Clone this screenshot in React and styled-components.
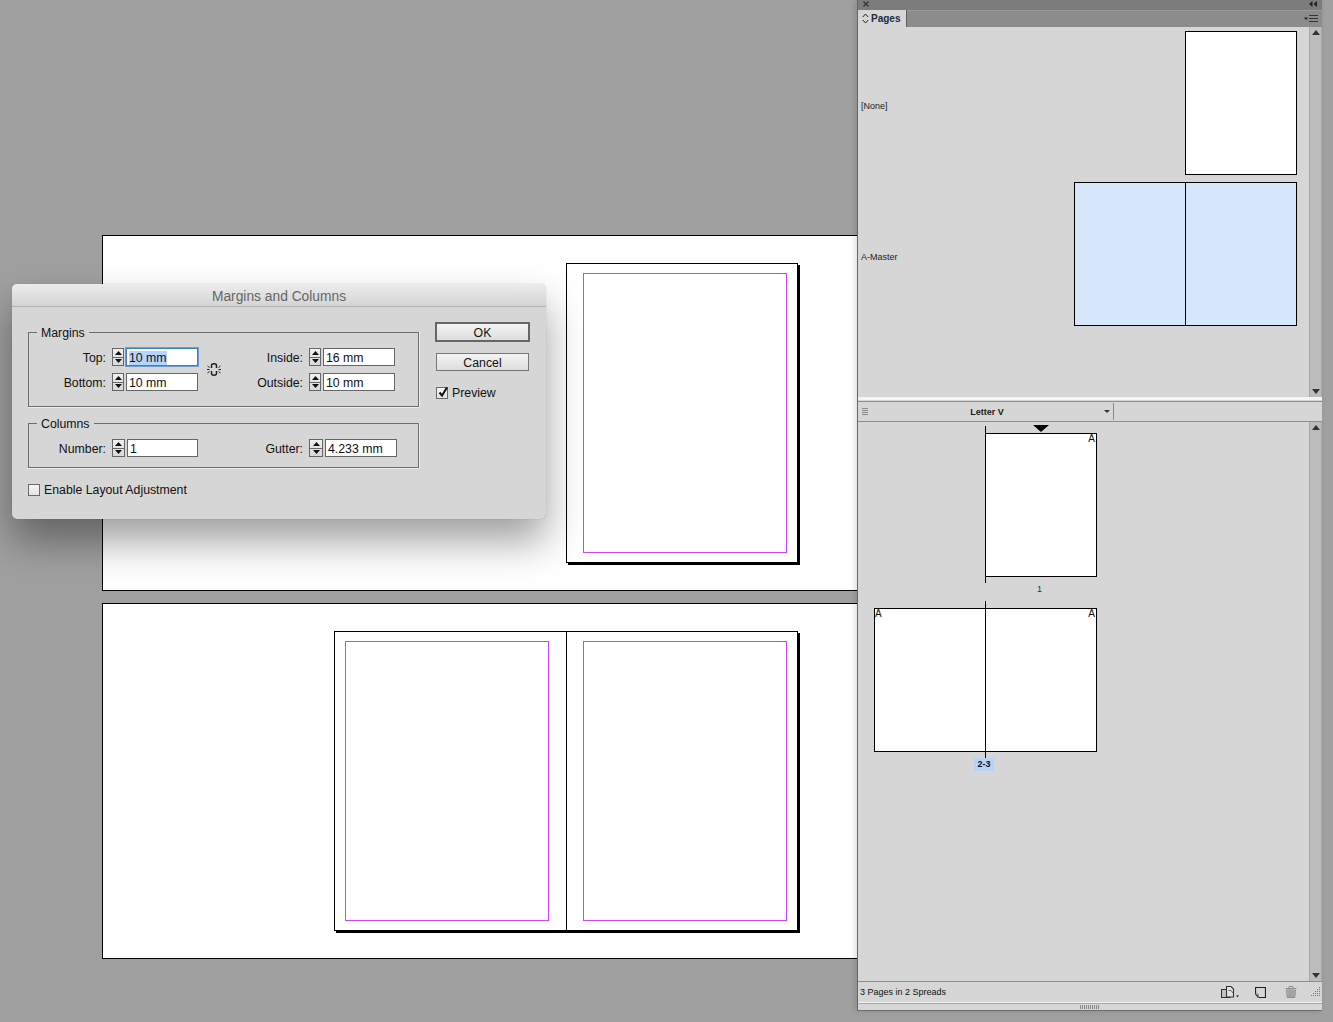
import React from "react";
import styled, { createGlobalStyle } from "styled-components";

const Global = createGlobalStyle`
  html, body { margin: 0; padding: 0; background: #a0a0a0; }
  * { box-sizing: border-box; }
  #root { width: 1333px; height: 1022px; overflow: hidden; }
`;

const Workspace = styled.div`
  position: relative;
  display: flex;
  align-items: flex-start;
  width: 1333px;
  height: 1022px;
  overflow: hidden;
  background: #a0a0a0;
  font-family: "Liberation Sans", Arial, sans-serif;
  color: #111;
`;

/* ---------- document canvas ---------- */
const Canvas = styled.main`
  flex: none;
  width: 857px;
  height: 1022px;
  padding: 235px 0 0 102px;
  display: flex;
  flex-direction: column;
  gap: 12px;
`;
const Pasteboard = styled.section`
  height: 356px;
  background: #fff;
  border: 1px solid #000;
  border-right: 0;
  padding: 27px 59px 0 0;
  display: flex;
  justify-content: flex-end;
  align-items: flex-start;
`;
const Sheet = styled.div`
  display: flex;
  height: 300px;
  border: 1px solid #000;
  box-shadow: 2px 2px 0 #000;
  background: #fff;
`;
const SheetPage = styled.div`
  width: ${(p) => (p.$left ? "232px" : "230px")};
  padding: 9px ${(p) => (p.$left ? "17px" : "10px")} 9px ${(p) => (p.$left ? "10px" : "16px")};
  border-right: ${(p) => (p.$left ? "1px solid #000" : "0")};
`;
const MarginGuide = styled.div`
  width: 100%;
  height: 100%;
  border: 1px solid #cc44f4;
`;

/* ---------- pages panel ---------- */
const Panel = styled.aside`
  flex: none;
  width: 465px;
  height: 1011px;
  display: flex;
  flex-direction: column;
  background: #d6d6d6;
  border-left: 1px solid #666;
  border-bottom: 1px solid #6c6c6c;
  box-shadow: -2px 0 6px rgba(0, 0, 0, 0.14);
`;
const TitleStrip = styled.div`
  flex: none;
  height: 10px;
  background: #7c7c7c;
  display: flex;
  align-items: flex-start;
  justify-content: space-between;
  padding: 1px 5px 0 5px;
`;
const TabBar = styled.div`
  flex: none;
  height: 17px;
  background: #8c8c8c;
  display: flex;
  align-items: stretch;
  justify-content: space-between;
  box-shadow: inset 0 1px 0 #9a9a9a;
`;
const Tab = styled.div`
  width: 49px;
  background: #d6d6d6;
  border-right: 1px solid #5f5f5f;
  display: flex;
  align-items: center;
  gap: 2px;
  padding-left: 4px;
  font-size: 10px;
  font-weight: 700;
  color: #222a3a;
`;
const MenuButton = styled.div`
  display: flex;
  align-items: center;
  padding-right: 4px;
`;
const Pane = styled.div`
  display: flex;
  height: ${(p) => p.$height}px;
  flex: none;
`;
const PaneBody = styled.div`
  flex: 1;
  min-width: 0;
  display: flex;
  flex-direction: column;
`;
const MastersBody = styled(PaneBody)`
  gap: 7px;
  padding: 4px 12px 0 3px;
`;
const MasterRow = styled.div`
  display: flex;
  align-items: center;
  justify-content: space-between;
  font-size: 9px;
  color: #222;
`;
const MasterName = styled.span`
  margin-top: 5px;
`;
const Thumb = styled.div`
  flex: none;
  position: relative;
  height: 144px;
  width: ${(p) => (p.$spread ? "223px" : "112px")};
  background: ${(p) => (p.$tint ? "#d6e6fb" : "#fff")};
  border: 1px solid #000;
`;
const CentreLine = styled.span`
  position: absolute;
  left: 110px;
  top: 0;
  bottom: 0;
  width: 1px;
  background: #000;
`;
const Scrollbar = styled.div`
  flex: none;
  width: 13px;
  display: flex;
  flex-direction: column;
  justify-content: space-between;
  align-items: center;
  padding: 3px 0;
  background: #bcbcbc;
  border-left: 1px solid #a8a8a8;
  border-right: 1px solid #a8a8a8;
`;
const PaneDivider = styled.div`
  flex: none;
  height: 5px;
  background: #d6d6d6;
  border-top: 3px solid #f4f4f4;
  border-bottom: 1px solid #8e8e8e;
`;
const MasterSelect = styled.div`
  flex: none;
  height: 20px;
  display: flex;
  align-items: center;
  border-bottom: 1px solid #8e8e8e;
`;
const Grip = styled.div`
  width: 6px;
  height: 8px;
  margin-left: 4px;
  background: repeating-linear-gradient(to bottom, #8a8a8a 0 1px, transparent 1px 2px);
`;
const SelectLabel = styled.div`
  width: 238px;
  text-align: center;
  font-size: 9px;
  font-weight: 700;
  color: #1a1a1a;
`;
const SelectCaret = styled.div`
  width: 8px;
  margin-left: -3px;
  display: flex;
  justify-content: center;
`;
const SelectEnd = styled.div`
  width: 1px;
  height: 17px;
  margin-left: 2px;
  background: #8a8a8a;
`;
const PagesBody = styled(PaneBody)`
  padding-top: 11px;
`;
const PageColumn = styled.div`
  width: 239px;
  display: flex;
  flex-direction: column;
  align-items: flex-end;
`;
const PageThumb = styled(Thumb)``;
const Spine = styled.span`
  position: absolute;
  left: ${(p) => (p.$spread ? "110px" : "-1px")};
  top: -8px;
  bottom: -7px;
  width: 1px;
  background: #000;
`;
const Marker = styled.span`
  position: absolute;
  left: 47px;
  top: -9px;
  width: 0;
  height: 0;
  border-left: 8px solid transparent;
  border-right: 8px solid transparent;
  border-top: 7px solid #000;
`;
const Prefix = styled.span`
  position: absolute;
  top: 0;
  line-height: 10px;
  font-size: 10px;
  color: #111;
  ${(p) => (p.$left ? "left: 0;" : "right: 1px;")}
`;
const PageLabelRow = styled.div`
  height: 31px;
  width: 239px;
  padding-left: ${(p) => p.$pad}px;
  padding-top: 7px;
  font-size: 9px;
  line-height: 11px;
  color: #333;
`;
const SpreadBadge = styled.span`
  display: inline-block;
  width: 20px;
  height: 13px;
  margin-top: -1px;
  background: #b9d3f8;
  text-align: center;
  line-height: 13px;
  font-size: 9px;
  font-weight: 700;
  color: #111;
`;
const StatusBar = styled.div`
  flex: none;
  height: 22px;
  border-top: 1px solid #8e8e8e;
  border-bottom: 1px solid #f2f2f2;
  display: flex;
  align-items: center;
  justify-content: space-between;
  padding-left: 2px;
  font-size: 9px;
  color: #111;
`;
const StatusTools = styled.div`
  display: flex;
  align-items: center;
`;
const ToolSlot = styled.div`
  width: ${(p) => p.$w}px;
  display: flex;
  align-items: center;
  justify-content: flex-start;
`;
const PanelFoot = styled.div`
  flex: 1;
  display: flex;
  align-items: center;
  justify-content: center;
  border-top: 1px solid #a8a8a8;
`;
const FootGrip = styled.div`
  width: 20px;
  height: 4px;
  background: repeating-linear-gradient(to right, #8a8a8a 0 1px, transparent 1px 2px);
`;

/* ---------- dialog ---------- */
const Dialog = styled.div`
  position: absolute;
  left: 12px;
  top: 284px;
  width: 534px;
  height: 235px;
  border-radius: 5px;
  background: #d6d6d6;
  box-shadow: 0 22px 40px rgba(0, 0, 0, 0.38), 0 0 1px rgba(0, 0, 0, 0.3);
  font-size: 12.3px;
`;
const DialogTitle = styled.div`
  height: 23px;
  border-radius: 5px 5px 0 0;
  background: linear-gradient(#ececec, #d4d4d4);
  border-bottom: 1px solid #b0b0b0;
  text-align: center;
  line-height: 26px;
  font-size: 13.8px;
  color: #666;
`;
const DialogBody = styled.div`
  display: flex;
  padding: 15px 16px 0 16px;
  gap: 16px;
`;
const DialogMain = styled.div`
  width: 392px;
  padding-top: 3px;
  display: flex;
  flex-direction: column;
  gap: 9px;
`;
const Group = styled.fieldset`
  margin: 0;
  padding: 8px 0 0;
  min-width: 0;
  height: ${(p) => p.$height}px;
  border: 1px solid #6e6e6e;
  box-shadow: 0 1px 0 #ededed, 1px 0 0 #ededed;
  display: grid;
  grid-template-columns: 183px 1fr;
`;
const Legend = styled.legend`
  margin-left: 8px;
  padding: 1px 4px 0;
  font-size: 12.3px;
  line-height: 14px;
  color: #111;
`;
const FieldCol = styled.div`
  display: flex;
  flex-direction: column;
  gap: 7px;
`;
const Field = styled.div`
  display: flex;
  align-items: center;
  height: 18px;
`;
const FieldLabel = styled.label`
  flex: none;
  width: ${(p) => p.$w}px;
  padding-top: 2px;
  text-align: right;
  margin-right: 6px;
  white-space: nowrap;
`;
const StepBox = styled.div`
  flex: none;
  width: ${(p) => p.$w || 12}px;
  height: 18px;
  border: 1px solid #666;
  background: linear-gradient(#f0f0f0, #d8d8d8);
  margin-right: 2px;
  display: flex;
  flex-direction: column;
`;
const StepHalf = styled.div`
  flex: 1;
  display: flex;
  align-items: center;
  justify-content: center;
  border-top: ${(p) => (p.$second ? "1px solid #666" : "0")};
`;
const TextInput = styled.div`
  flex: none;
  width: ${(p) => p.$w || 72}px;
  height: 18px;
  background: #fff;
  border: 1px solid #666;
  padding-left: 2px;
  line-height: 19px;
  white-space: nowrap;
  ${(p) => p.$focus && "border: 1px solid #3b7fc4; box-shadow: 0 0 0 1px #6aa0d8;"}
`;
const Selected = styled.span`
  background: #b5d5ff;
`;
const LinkSlot = styled.div`
  position: absolute;
  left: 194px;
  top: 77px;
  line-height: 0;
`;
const CheckRow = styled.div`
  display: flex;
  align-items: center;
  gap: 4px;
`;
const AdjustRow = styled(CheckRow)`
  margin-top: 6px;
`;
const CheckBox = styled.div`
  flex: none;
  width: 12px;
  height: 12px;
  border: 1px solid #6a6a6a;
  background: linear-gradient(#f6f6f6, #e2e2e2);
  position: relative;
`;
const CheckMark = styled.svg`
  position: absolute;
  left: 0;
  top: -3px;
`;
const DialogSide = styled.div`
  width: 95px;
  display: flex;
  flex-direction: column;
  align-items: center;
`;
const Button = styled.div`
  text-align: center;
  background: linear-gradient(#f4f4f4, #dcdcdc);
  color: #111;
  width: ${(p) => (p.$primary ? "95px" : "93px")};
  height: ${(p) => (p.$primary ? "20px" : "18px")};
  line-height: 18px;
  border: ${(p) => (p.$primary ? "2px solid #666" : "1px solid #777")};
  margin-bottom: ${(p) => (p.$primary ? "11px" : "15px")};
`;
const PreviewRow = styled(CheckRow)`
  width: 93px;
`;

/* ---------- drawings ---------- */
const Tri = ({ up, w = 7, h = 4, fill = "#111" }) => (
  <svg width={w} height={h} viewBox={`0 0 ${w} ${h}`}>
    <polygon points={up ? `0,${h} ${w},${h} ${w / 2},0` : `0,0 ${w},0 ${w / 2},${h}`} fill={fill} />
  </svg>
);

const Stepper = ({ w }) => (
  <StepBox $w={w}>
    <StepHalf><Tri up /></StepHalf>
    <StepHalf $second><Tri /></StepHalf>
  </StepBox>
);

const LinkIcon = () => (
  <svg width="16" height="17" viewBox="0 0 16 17" fill="none" stroke="#222">
    <path d="M5.5 7V4.5C5.5 2.2 10.5 2.2 10.5 4.5V7" strokeWidth="1.5" />
    <path d="M5.5 10V12.5C5.5 14.8 10.5 14.8 10.5 12.5V10" strokeWidth="1.5" />
    <path d="M1 8.5H3.5M1.5 5L3.5 6.5M1.5 12L3.5 10.5M12.5 8.5H15M14.5 5L12.5 6.5M14.5 12L12.5 10.5" strokeWidth="1" />
  </svg>
);

const SortGlyph = () => (
  <svg width="7" height="11" viewBox="0 0 7 11" fill="none" stroke="#222" strokeWidth="1">
    <path d="M0.8 4L3.5 1L6.2 4M0.8 7L3.5 10L6.2 7" />
  </svg>
);

const CloseGlyph = () => (
  <svg width="6" height="6" viewBox="0 0 6 6" stroke="#333" strokeWidth="1.2">
    <path d="M0.5 0.5L5.5 5.5M5.5 0.5L0.5 5.5" />
  </svg>
);

const CollapseGlyph = () => (
  <svg width="8" height="6" viewBox="0 0 8 6" fill="#222">
    <path d="M3.5 0V6L0 3ZM8 0V6L4.5 3Z" />
  </svg>
);

const MenuGlyph = () => (
  <svg width="14" height="8" viewBox="0 0 14 8">
    <path d="M0 2.5H4L2 5Z" fill="#222" />
    <path d="M5 0.5H14M5 3.5H14M5 6.5H14" stroke="#333" strokeWidth="1" />
  </svg>
);

const NewSpreadGlyph = () => (
  <svg width="18" height="12" viewBox="0 0 18 12" fill="none" stroke="#333">
    <path d="M0.5 3.5H9V11.5H0.5Z" fill="#c4c4c4" strokeWidth="1.1" />
    <path d="M5.5 0.5H10L12.5 3V11H5.5Z" fill="#e2e2e2" strokeWidth="1.1" />
    <path d="M7.5 4.5H10L12 7" stroke="#666" />
    <path d="M15 9.5H18L16.5 11.2Z" fill="#111" stroke="none" />
  </svg>
);

const NewPageGlyph = () => (
  <svg width="11" height="11" viewBox="0 0 11 11" fill="none" stroke="#222">
    <path d="M0.5 7V0.5H10.5V10.5H3.5Z" strokeWidth="1.2" fill="#d6d6d6" />
    <path d="M0.5 7H3.5V10.5" stroke="#888" />
  </svg>
);

const TrashGlyph = () => (
  <svg width="12" height="12" viewBox="0 0 12 12" fill="none" stroke="#8f8f8f">
    <path d="M0.5 2.5H11.5M4 2V0.5H8V2" />
    <path d="M1.5 4H10.5L9.8 11.5H2.2Z" fill="#b5b5b5" />
    <path d="M4 5V11M6 5V11M8 5V11" />
  </svg>
);

const ResizeGlyph = () => (
  <svg width="10" height="10" viewBox="0 0 10 10" fill="#7a7a7a">
    {[[8, 0], [6, 2], [8, 2], [4, 4], [6, 4], [8, 4], [2, 6], [4, 6], [6, 6], [8, 6], [0, 8], [2, 8], [4, 8], [6, 8], [8, 8]].map(([x, y]) => (
      <rect key={`${x}-${y}`} x={x} y={y} width="1" height="1" />
    ))}
  </svg>
);

const FormField = ({ label, labelWidth, value, stepW, inputW, focus }) => (
  <Field>
    <FieldLabel $w={labelWidth}>{label}</FieldLabel>
    <Stepper w={stepW} />
    <TextInput $w={inputW} $focus={focus}>
      {focus ? <Selected>{value}</Selected> : value}
    </TextInput>
  </Field>
);

export default function App() {
  return (
    <Workspace>
      <Global />
      <Canvas>
        <Pasteboard>
          <Sheet>
            <SheetPage><MarginGuide /></SheetPage>
          </Sheet>
        </Pasteboard>
        <Pasteboard>
          <Sheet>
            <SheetPage $left><MarginGuide /></SheetPage>
            <SheetPage><MarginGuide /></SheetPage>
          </Sheet>
        </Pasteboard>
      </Canvas>

      <Panel>
        <TitleStrip>
          <CloseGlyph />
          <CollapseGlyph />
        </TitleStrip>
        <TabBar>
          <Tab><SortGlyph />Pages</Tab>
          <MenuButton><MenuGlyph /></MenuButton>
        </TabBar>
        <Pane $height={370}>
          <MastersBody>
            <MasterRow>
              <MasterName>[None]</MasterName>
              <Thumb />
            </MasterRow>
            <MasterRow>
              <MasterName>A-Master</MasterName>
              <Thumb $spread $tint><CentreLine /></Thumb>
            </MasterRow>
          </MastersBody>
          <Scrollbar>
            <Tri up w={8} h={5} fill="#333" />
            <Tri w={8} h={5} fill="#333" />
          </Scrollbar>
        </Pane>
        <PaneDivider />
        <MasterSelect>
          <Grip />
          <SelectLabel>Letter V</SelectLabel>
          <SelectCaret><Tri w={6} h={3} fill="#333" /></SelectCaret>
          <SelectEnd />
        </MasterSelect>
        <Pane $height={559}>
          <PagesBody>
            <PageColumn>
              <PageThumb>
                <Spine />
                <Marker />
                <Prefix>A</Prefix>
              </PageThumb>
              <PageLabelRow $pad={179}>1</PageLabelRow>
              <PageThumb $spread>
                <Spine $spread />
                <Prefix $left>A</Prefix>
                <Prefix>A</Prefix>
              </PageThumb>
              <PageLabelRow $pad={116}><SpreadBadge>2-3</SpreadBadge></PageLabelRow>
            </PageColumn>
          </PagesBody>
          <Scrollbar>
            <Tri up w={8} h={5} fill="#333" />
            <Tri w={8} h={5} fill="#333" />
          </Scrollbar>
        </Pane>
        <StatusBar>
          3 Pages in 2 Spreads
          <StatusTools>
            <ToolSlot $w={34}><NewSpreadGlyph /></ToolSlot>
            <ToolSlot $w={30}><NewPageGlyph /></ToolSlot>
            <ToolSlot $w={26}><TrashGlyph /></ToolSlot>
            <ToolSlot $w={11}><ResizeGlyph /></ToolSlot>
          </StatusTools>
        </StatusBar>
        <PanelFoot><FootGrip /></PanelFoot>
      </Panel>

      <Dialog>
        <DialogTitle>Margins and Columns</DialogTitle>
        <DialogBody>
          <DialogMain>
            <Group $height={82}>
              <Legend>Margins</Legend>
              <FieldCol>
                <FormField label="Top:" labelWidth={77} value="10 mm" focus />
                <FormField label="Bottom:" labelWidth={77} value="10 mm" />
              </FieldCol>
              <FieldCol>
                <FormField label="Inside:" labelWidth={91} value="16 mm" />
                <FormField label="Outside:" labelWidth={91} value="10 mm" />
              </FieldCol>
              <LinkSlot><LinkIcon /></LinkSlot>
            </Group>
            <Group $height={52}>
              <Legend>Columns</Legend>
              <FieldCol>
                <FormField label="Number:" labelWidth={77} value="1" stepW={13} inputW={71} />
              </FieldCol>
              <FieldCol>
                <FormField label="Gutter:" labelWidth={91} value="4.233 mm" stepW={14} />
              </FieldCol>
            </Group>
            <AdjustRow>
              <CheckBox />
              Enable Layout Adjustment
            </AdjustRow>
          </DialogMain>
          <DialogSide>
            <Button $primary>OK</Button>
            <Button>Cancel</Button>
            <PreviewRow>
              <CheckBox>
                <CheckMark width="13" height="14" viewBox="0 0 13 14" fill="none" stroke="#111" strokeWidth="2">
                  <path d="M2.5 7.5L5 10.5L10 2.5" />
                </CheckMark>
              </CheckBox>
              Preview
            </PreviewRow>
          </DialogSide>
        </DialogBody>
      </Dialog>
    </Workspace>
  );
}
